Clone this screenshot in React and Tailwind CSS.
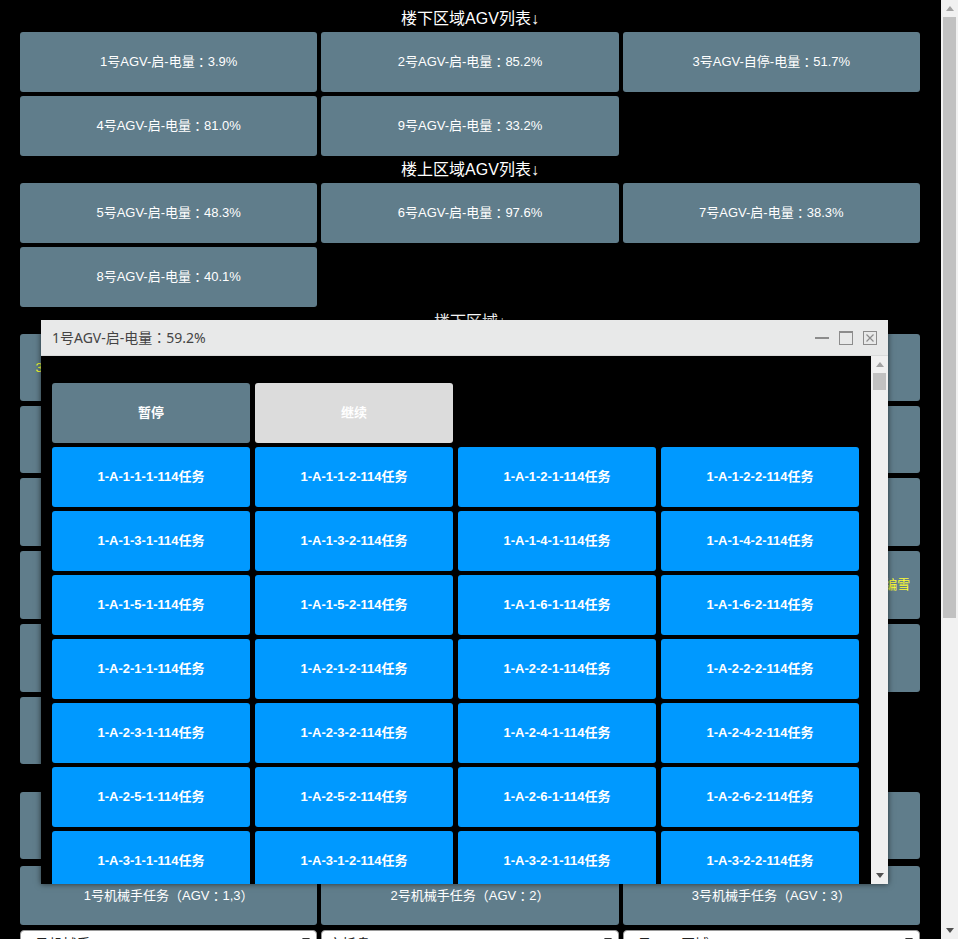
import React from 'react';

const tasks = [];
for (let a = 1; a <= 3; a++) {
  for (let b = 1; b <= 6; b++) {
    for (let c = 1; c <= 2; c++) tasks.push(`1-A-${a}-${b}-${c}-114任务`);
  }
}

const downstairs = [
  '1号AGV-启-电量：3.9%',
  '2号AGV-启-电量：85.2%',
  '3号AGV-自停-电量：51.7%',
  '4号AGV-启-电量：81.0%',
  '9号AGV-启-电量：33.2%',
];
const upstairs = [
  '5号AGV-启-电量：48.3%',
  '6号AGV-启-电量：97.6%',
  '7号AGV-启-电量：38.3%',
  '8号AGV-启-电量：40.1%',
];

// 楼下区域 cells, null = empty slot
const areaRows = [
  ['3号库位：托盘-空-物料编号：A-1-1-1-114任务', '1-A-1-2', '1-A-1-3'],
  ['1-A-2-1', '1-A-2-2', '1-A-2-3'],
  ['1-A-3-1', '1-A-3-2', '1-A-3-3'],
  ['1-A-4-1', '1-A-4-2', '2号库位：托盘-满-物料编号：A-2-4-1-1140-编雪'],
  ['1-A-5-1', '1-A-5-2', '1-A-5-3'],
  ['1-A-6-1', '1-A-6-2', null],
];

// full-width punctuation drawn centred, as in the original page font
function Txt({ text }) {
  return text.split(/([：（）])/).map((part, i) =>
    /^[：（）]$/.test(part) ? (
      <span key={i} className="font-['Noto_Sans_CJK_TC',sans-serif]">
        {part}
      </span>
    ) : (
      <React.Fragment key={i}>{part}</React.Fragment>
    )
  );
}

function Heading({ children, className = '' }) {
  return (
    <div className={`h-[22px] text-center text-[16px] leading-[22px] text-white ${className}`}>{children}</div>
  );
}

function Tile({ text, className = '', yellow }) {
  return (
    <div
      className={`flex items-center justify-center whitespace-nowrap rounded-[3px] bg-[#607d8b] text-center text-[13px] ${
        yellow ? 'text-[#ffff33]' : 'text-white'
      } ${className}`}
    >
      <Txt text={text} />
    </div>
  );
}

function Arrow({ down, color = '#a3a3a3' }) {
  return (
    <svg width="8" height="5" viewBox="0 0 8 5">
      <path d={down ? 'M0 0 L8 0 L4 5 Z' : 'M0 5 L8 5 L4 0 Z'} fill={color} />
    </svg>
  );
}

function Dialog() {
  return (
    <div className="absolute left-[41px] top-[320px] flex h-[564px] w-[847px] flex-col shadow-[0_0_6px_rgba(0,0,0,0.6)]">
      {/* title bar */}
      <div className="flex h-[36px] items-center justify-between border-b border-[#d9dbdb] bg-[#e8e9e9] pl-[11px] pr-[11px]">
        <span className="font-['Noto_Sans','Noto_Sans_CJK_SC',sans-serif] text-[14px] text-[#444]">
          <Txt text="1号AGV-启-电量：59.2%" />
        </span>
        <div className="flex items-center gap-[10px]">
          <svg width="14" height="14" viewBox="0 0 14 14">
            <rect x="0" y="6" width="14" height="2" fill="#8c8c8c" />
          </svg>
          <svg width="14" height="14" viewBox="0 0 14 14">
            <rect x="0.5" y="0.5" width="13" height="13" fill="none" stroke="#8c8c8c" />
            <rect x="0" y="0" width="14" height="2" fill="#8c8c8c" />
          </svg>
          <svg width="14" height="14" viewBox="0 0 14 14">
            <rect x="0.5" y="0.5" width="13" height="13" fill="none" stroke="#8c8c8c" />
            <path d="M3.5 3.5 L10.5 10.5 M10.5 3.5 L3.5 10.5" stroke="#8c8c8c" strokeWidth="1.2" />
          </svg>
        </div>
      </div>
      {/* body */}
      <div className="flex min-h-0 flex-1 bg-black">
        <div className="min-w-0 flex-1 overflow-hidden pl-[11px] pr-[12px] pt-[27px]">
          <div className="grid grid-cols-4 gap-x-[5px] gap-y-[4px] text-[13px] font-bold text-white">
            <div className="flex h-[60px] items-center justify-center rounded-[3px] bg-[#607d8b]">暂停</div>
            <div className="flex h-[60px] items-center justify-center rounded-[3px] bg-[#dcdcdc]">继续</div>
            <div />
            <div />
            {tasks.map((t) => (
              <div key={t} className="flex h-[60px] items-center justify-center rounded-[3px] bg-[#0099ff]">
                {t}
              </div>
            ))}
          </div>
        </div>
        <div className="flex w-[17px] flex-col items-center bg-[#f0f0f0]">
          <div className="flex h-[17px] items-center justify-center">
            <Arrow color="#a3a3a3" />
          </div>
          <div className="h-[17px] w-[13px] bg-[#c1c1c1]" />
          <div className="flex-1" />
          <div className="flex h-[17px] items-center justify-center">
            <Arrow down color="#505050" />
          </div>
        </div>
      </div>
    </div>
  );
}

export default function App() {
  return (
    <div className="relative flex h-[939px] w-full overflow-hidden bg-black font-['Liberation_Sans','Noto_Sans_CJK_SC',sans-serif]">
      <div className="min-w-0 flex-1 pl-[20px] pr-[21px] pt-[8px]">
        <Heading>楼下区域AGV列表↓</Heading>
        <div className="mt-[2px] grid grid-cols-3 gap-[4px]">
          {downstairs.map((a) => (
            <Tile key={a} text={a} className="h-[60px]" />
          ))}
        </div>

        <Heading className="mt-[3px]">楼上区域AGV列表↓</Heading>
        <div className="mt-[2px] grid grid-cols-3 gap-[4px]">
          {upstairs.map((a) => (
            <Tile key={a} text={a} className="h-[60px]" />
          ))}
        </div>

        <Heading className="mt-[4px]">楼下区域↓</Heading>
        <div className="mt-[1px] grid grid-cols-3 grid-rows-[67px_67px_68px_68px_68px_67px] gap-x-[4px] gap-y-[5px]">
          {areaRows.flatMap((row, r) =>
            row.map((cell, c) =>
              cell ? (
                <Tile key={`${r}-${c}`} text={cell} yellow={cell.length > 20} />
              ) : (
                <div key={`${r}-${c}`} />
              )
            )
          )}
        </div>

        <Heading className="mt-[4px]">楼上区域↓</Heading>
        <div className="mt-[2px] grid grid-cols-3 gap-[4px]">
          <Tile text="2-B-1-1" className="h-[67px]" />
          <Tile text="2-B-1-2" className="h-[67px]" />
          <Tile text="2-B-1-3" className="h-[67px]" />
        </div>

        <div className="mt-[7px] grid grid-cols-3 gap-[4px]">
          <Tile text="1号机械手任务（AGV：1,3）" className="h-[59px]" />
          <Tile text="2号机械手任务（AGV：2）" className="h-[59px]" />
          <Tile text="3号机械手任务（AGV：3）" className="h-[59px]" />
        </div>

        <div className="mt-[5px] grid grid-cols-3 gap-[4px]">
          {['1号机械手', '空托盘', '1号AGV区域'].map((s) => (
            <div
              key={s}
              className="flex h-[30px] items-start justify-between rounded-[4px] border border-[#9a9a9a] bg-white px-[6px] pt-[3px] text-[14px] text-[#222]"
            >
              <span>{s}</span>
              <span className="pt-[4px]">
                <Arrow down color="#333" />
              </span>
            </div>
          ))}
        </div>
      </div>

      {/* page scrollbar */}
      <div className="flex w-[17px] shrink-0 flex-col items-center bg-[#f1f1f1]">
        <div className="flex h-[17px] items-center justify-center">
          <Arrow color="#a3a3a3" />
        </div>
        <div className="h-[601px] w-[13px] bg-[#c1c1c1]" />
        <div className="flex-1" />
        <div className="flex h-[17px] items-center justify-center">
          <Arrow down color="#505050" />
        </div>
      </div>

      <Dialog />
    </div>
  );
}
